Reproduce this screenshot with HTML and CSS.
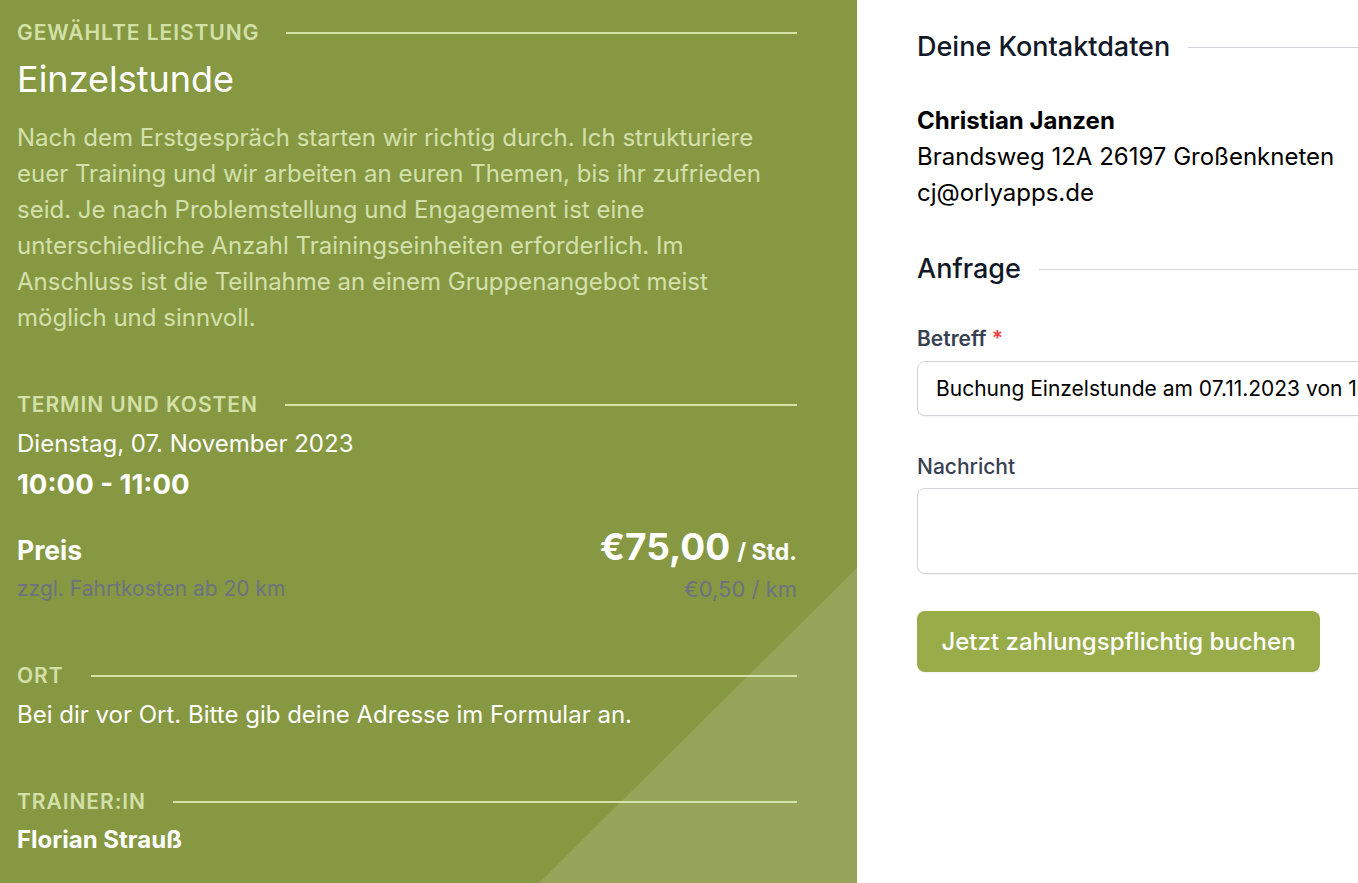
FILE: index.html
```html
<!DOCTYPE html>
<html lang="de">
<head>
<meta charset="utf-8">
<title>Buchung</title>
<link rel="stylesheet" href="styles.css">
</head>
<body>
<div class="page">
  <aside class="panel">
    <div class="label first">Gewählte Leistung</div>
    <h1 class="title">Einzelstunde</h1>
    <p class="desc">Nach dem Erstgespräch starten wir richtig durch. Ich strukturiere euer Training und wir arbeiten an euren Themen, bis ihr zufrieden seid. Je nach Problemstellung und Engagement ist eine unterschiedliche Anzahl Trainingseinheiten erforderlich. Im Anschluss ist die Teilnahme an einem Gruppenangebot meist möglich und sinnvoll.</p>

    <div class="label sec">Termin und Kosten</div>
    <div class="date">Dienstag, 07. November 2023</div>
    <div class="time">10:00 - 11:00</div>
    <div class="price-row">
      <span class="price-label">Preis</span>
      <span class="price"><span class="amount">€75,00</span><span class="unit">/ Std.</span></span>
    </div>
    <div class="sub-row">
      <span>zzgl. Fahrtkosten ab 20 km</span>
      <span class="per-km">€0,50 / km</span>
    </div>

    <div class="label sec-ort">Ort</div>
    <div class="text">Bei dir vor Ort. Bitte gib deine Adresse im Formular an.</div>

    <div class="label sec">Trainer:in</div>
    <div class="trainer">Florian Strauß</div>
  </aside>

  <main class="form-col">
    <h2 class="heading">Deine Kontaktdaten</h2>
    <div class="contact">
      <div class="name">Christian Janzen</div>
      <div>Brandsweg 12A 26197 Großenkneten</div>
      <div>cj@orlyapps.de</div>
    </div>

    <h2 class="heading second">Anfrage</h2>
    <label class="field-label first-field">Betreff <span class="req">*</span></label>
    <div class="input">Buchung Einzelstunde am 07.11.2023 von 10:00 bis 11:00</div>
    <label class="field-label plain">Nachricht</label>
    <div class="textarea"></div>
    <button class="btn" type="button">Jetzt zahlungspflichtig buchen</button>
  </main>
</div>
</body>
</html>
```

FILE: styles.css
```css
* { box-sizing: border-box; }
html, body { margin: 0; padding: 0; }
body {
  font-family: Inter, "Noto Sans", sans-serif;
  background: #ffffff;
  overflow: hidden;
}
.page {
  display: flex;
  width: 1358px;
  height: 883px;
  overflow: hidden;
}
.panel {
  position: relative;
  flex: 0 0 857px;
  height: 883px;
  background: #879842;
  padding: 19px 60px 0 17px;
  color: #ffffff;
}
.panel::before {
  content: "";
  position: absolute;
  inset: 0;
  background: rgba(255, 255, 255, 0.13);
  clip-path: polygon(100% 568px, 100% 100%, calc(100% - 318px) 100%);
  pointer-events: none;
}
.panel > * { position: relative; }
.label {
  display: flex;
  align-items: center;
  gap: 27px;
  font-size: 21px;
  line-height: 28px;
  font-weight: 600;
  letter-spacing: 0.045em;
  text-transform: uppercase;
  color: #d3e0a8;
}
.label::after {
  content: "";
  flex: 1;
  height: 2px;
  background: #d3e2a6;
}
.title {
  margin: 12px 0 0;
  font-size: 36px;
  line-height: 40px;
  font-weight: 400;
  color: #ffffff;
}
.desc {
  margin: 21px 0 0;
  font-size: 24px;
  line-height: 36px;
  color: #d4e0ac;
}
.label.sec { margin-top: 55px; }
.date {
  margin-top: 7px;
  font-size: 24px;
  line-height: 36px;
}
.time {
  margin-top: 4px;
  font-size: 27.5px;
  line-height: 36px;
  font-weight: 700;
}
.price-row {
  margin-top: 23px;
  display: flex;
  justify-content: space-between;
  align-items: baseline;
}
.price-label {
  font-size: 26.5px;
  line-height: 44px;
  font-weight: 700;
}
.price { display: flex; align-items: baseline; gap: 7px; }
.amount {
  font-size: 37px;
  line-height: 44px;
  font-weight: 700;
}
.unit {
  font-size: 23px;
  font-weight: 700;
}
.sub-row {
  margin-top: 3px;
  display: flex;
  justify-content: space-between;
  font-size: 21px;
  line-height: 28px;
  color: #6b7280;
}
.per-km { font-size: 22px; }
.label.sec-ort { margin-top: 59px; }
.text {
  margin-top: 7px;
  font-size: 24px;
  line-height: 36px;
}
.trainer {
  margin-top: 6px;
  font-size: 24px;
  line-height: 36px;
  font-weight: 700;
}

.form-col {
  flex: 0 0 760px;
  padding: 29px 0 0 60px;
}
.heading {
  display: flex;
  align-items: center;
  gap: 18px;
  margin: 0;
  font-size: 27px;
  line-height: 36px;
  font-weight: 500;
  color: #111827;
}
.heading::after {
  content: "";
  flex: 1;
  height: 1px;
  background: #d1d5db;
}
.heading.second { margin-top: 40px; }
.contact {
  margin-top: 38px;
  font-size: 24px;
  line-height: 36px;
  color: #000000;
}
.name { font-weight: 700; }
.field-label {
  display: block;
  font-size: 21px;
  line-height: 28px;
  color: #374151;
}
.field-label.first-field { margin-top: 38px; font-weight: 600; }
.field-label.plain { margin-top: 37px; font-weight: 500; }
.req { color: #ef4444; }
.input {
  margin-top: 8px;
  height: 55px;
  border: 1px solid #d1d5db;
  border-radius: 8px;
  padding: 0 18px;
  display: flex;
  align-items: center;
  font-size: 21px;
  color: #000000;
  white-space: nowrap;
  box-shadow: 0 1px 2px rgba(0, 0, 0, 0.05);
}
.textarea {
  margin-top: 7px;
  height: 86px;
  border: 1px solid #d1d5db;
  border-radius: 8px;
  box-shadow: 0 1px 2px rgba(0, 0, 0, 0.05);
}
.btn {
  display: block;
  margin-top: 37px;
  width: 403px;
  height: 61px;
  border: 0;
  border-radius: 8px;
  background: #99ac4a;
  color: #ffffff;
  font-family: inherit;
  font-size: 24px;
  font-weight: 500;
  box-shadow: 0 1px 2px rgba(0, 0, 0, 0.05);
}
```
